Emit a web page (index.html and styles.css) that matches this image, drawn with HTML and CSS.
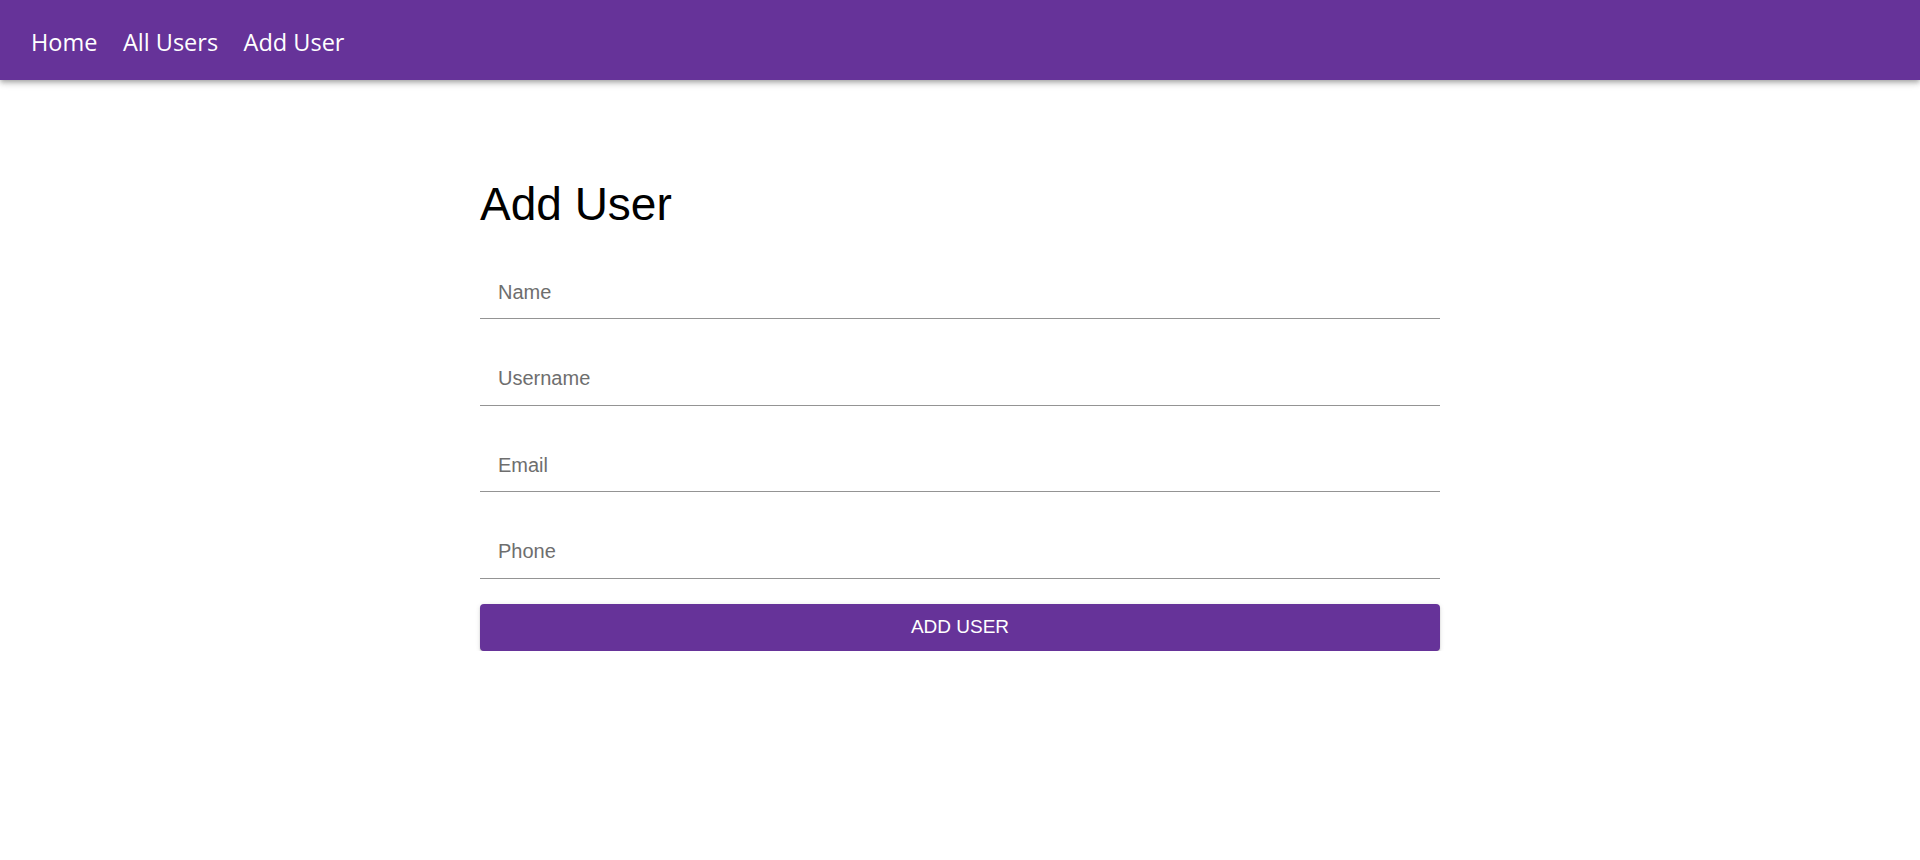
FILE: index.html
```html
<!DOCTYPE html>
<html lang="en">
<head>
<meta charset="utf-8">
<title>Add User</title>
<link rel="stylesheet" href="styles.css">
</head>
<body>
<header class="topbar">
  <nav class="nav">
    <a class="nav-link" href="#">Home</a>
    <a class="nav-link" href="#">All Users</a>
    <a class="nav-link" href="#">Add User</a>
  </nav>
</header>
<main class="container">
  <h1 class="title">Add User</h1>
  <form class="form">
    <input class="field" type="text" placeholder="Name">
    <input class="field" type="text" placeholder="Username">
    <input class="field" type="text" placeholder="Email">
    <input class="field" type="text" placeholder="Phone">
    <button class="btn" type="button">ADD USER</button>
  </form>
</main>
</body>
</html>
```

FILE: styles.css
```css
* { box-sizing: border-box; }
html, body { margin: 0; padding: 0; background: #ffffff; }
body { font-family: "Liberation Sans", Arial, sans-serif; }

.topbar {
  height: 80px;
  background: #663399;
  padding: 26px 31px 0;
  box-shadow: 0 2px 4px -1px rgba(0,0,0,0.2), 0 4px 5px 0 rgba(0,0,0,0.14), 0 1px 10px 0 rgba(0,0,0,0.12);
}
.nav { display: flex; gap: 25.5px; }
.nav-link {
  font-family: "Open Sans", sans-serif;
  font-size: 23.5px;
  line-height: 32px;
  color: #ffffff;
  text-decoration: none;
}

.container { width: 960px; margin: 0 auto; padding-top: 96px; }
.title {
  margin: 0 0 32px;
  font-weight: 400;
  font-size: 46px;
  line-height: 56px;
  color: #000000;
}
.form { display: flex; flex-direction: column; gap: 31.67px; }
.field {
  display: block;
  width: 100%;
  border: 0;
  border-bottom: 1px solid #949494;
  outline: none;
  background: transparent;
  padding: 16px 18px 14px;
  font-family: "Liberation Sans", Arial, sans-serif;
  font-size: 20px;
  line-height: 24px;
  height: 55px;
  color: #000;
}
.field::placeholder { color: #6e6e6e; opacity: 1; }
.btn {
  margin-top: -7px;
  height: 47px;
  width: 100%;
  border: 0;
  border-radius: 4px;
  background: #663399;
  color: #ffffff;
  font-family: "Liberation Sans", Arial, sans-serif;
  font-size: 19px;
  line-height: 24px;
  box-shadow: 0 3px 1px -2px rgba(0,0,0,0.2), 0 2px 2px 0 rgba(0,0,0,0.14), 0 1px 5px 0 rgba(0,0,0,0.12);
  cursor: pointer;
}
```
